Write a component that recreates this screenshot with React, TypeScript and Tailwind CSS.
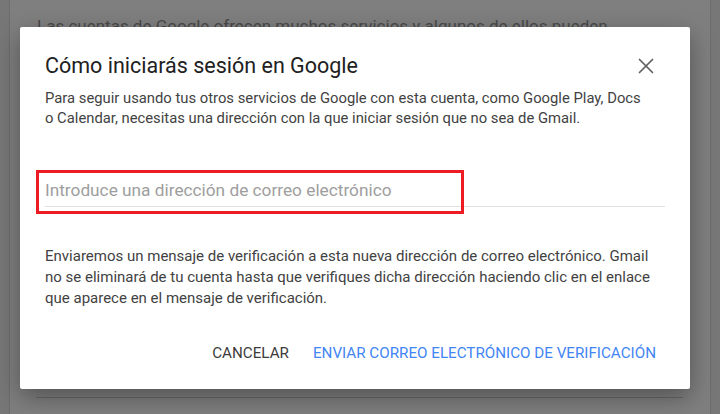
import { X } from "lucide-react";

export default function App() {
  return (
    <div
      className="relative h-[414px] w-[720px] overflow-hidden bg-[#777777]"
      style={{ fontFamily: "Roboto, 'Noto Sans', sans-serif" }}
    >
      {/* page behind the overlay */}
      <div className="mx-[9px] flex h-full flex-col border-x border-[#6c6c6c] bg-[#7f7f7f]">
        <p className="pl-[27px] pt-[14px] text-[17px] leading-[24px] text-[#4a4a4a]">
          Las cuentas de Google ofrecen muchos servicios y algunos de ellos pueden
        </p>
        <div className="mt-auto mb-[16px] ml-[26px] mr-[27px] h-px bg-[#666666]" />
      </div>

      {/* dialog */}
      <div className="absolute left-[20px] top-[27px] flex h-[362px] w-[670px] flex-col rounded-[2px] bg-white pl-[25px] pr-[34px] shadow-[0_8px_24px_rgba(0,0,0,0.35)]">
        <div className="mt-[27px] flex h-[24px] items-center justify-between">
          <h1 className="text-[21.5px] leading-[24px] text-[#212121]">
            Cómo iniciarás sesión en Google
          </h1>
          <button className="mr-[-3px] text-[#616161]">
            <X size={26} strokeWidth={1.6} />
          </button>
        </div>

        <p className="mt-[10px] text-[14.8px] leading-[20px] text-[#424242]">
          Para seguir usando tus otros servicios de Google con esta cuenta, como Google Play, Docs
          <br />o Calendar, necesitas una dirección con la que iniciar sesión que no sea de Gmail.
        </p>

        <div className="relative mt-[50px] mr-[-9px] border-b border-[#e0e0e0] pb-[3px]">
          <input
            className="w-full bg-transparent text-[17.25px] leading-[24px] text-[#212121] outline-none placeholder:text-[#9e9e9e]"
            placeholder="Introduce una dirección de correo electrónico"
          />
          <div className="pointer-events-none absolute left-[-9px] top-[-8px] h-[44px] w-[428px] border-[3px] border-[#ed1c24]" />
        </div>

        <p className="mt-[39px] text-[15px] leading-[21px] text-[#424242]">
          Enviaremos un mensaje de verificación a esta nueva dirección de correo electrónico. Gmail
          <br />
          no se eliminará de tu cuenta hasta que verifiques dicha dirección haciendo clic en el enlace
          <br />
          que aparece en el mensaje de verificación.
        </p>

        <div className="mt-[34px] flex justify-end gap-[24px] text-[15.2px] leading-[20px]">
          <button className="uppercase text-[#3c3c3c]">Cancelar</button>
          <button className="uppercase text-[#4285f4]">Enviar correo electrónico de verificación</button>
        </div>
      </div>
    </div>
  );
}
